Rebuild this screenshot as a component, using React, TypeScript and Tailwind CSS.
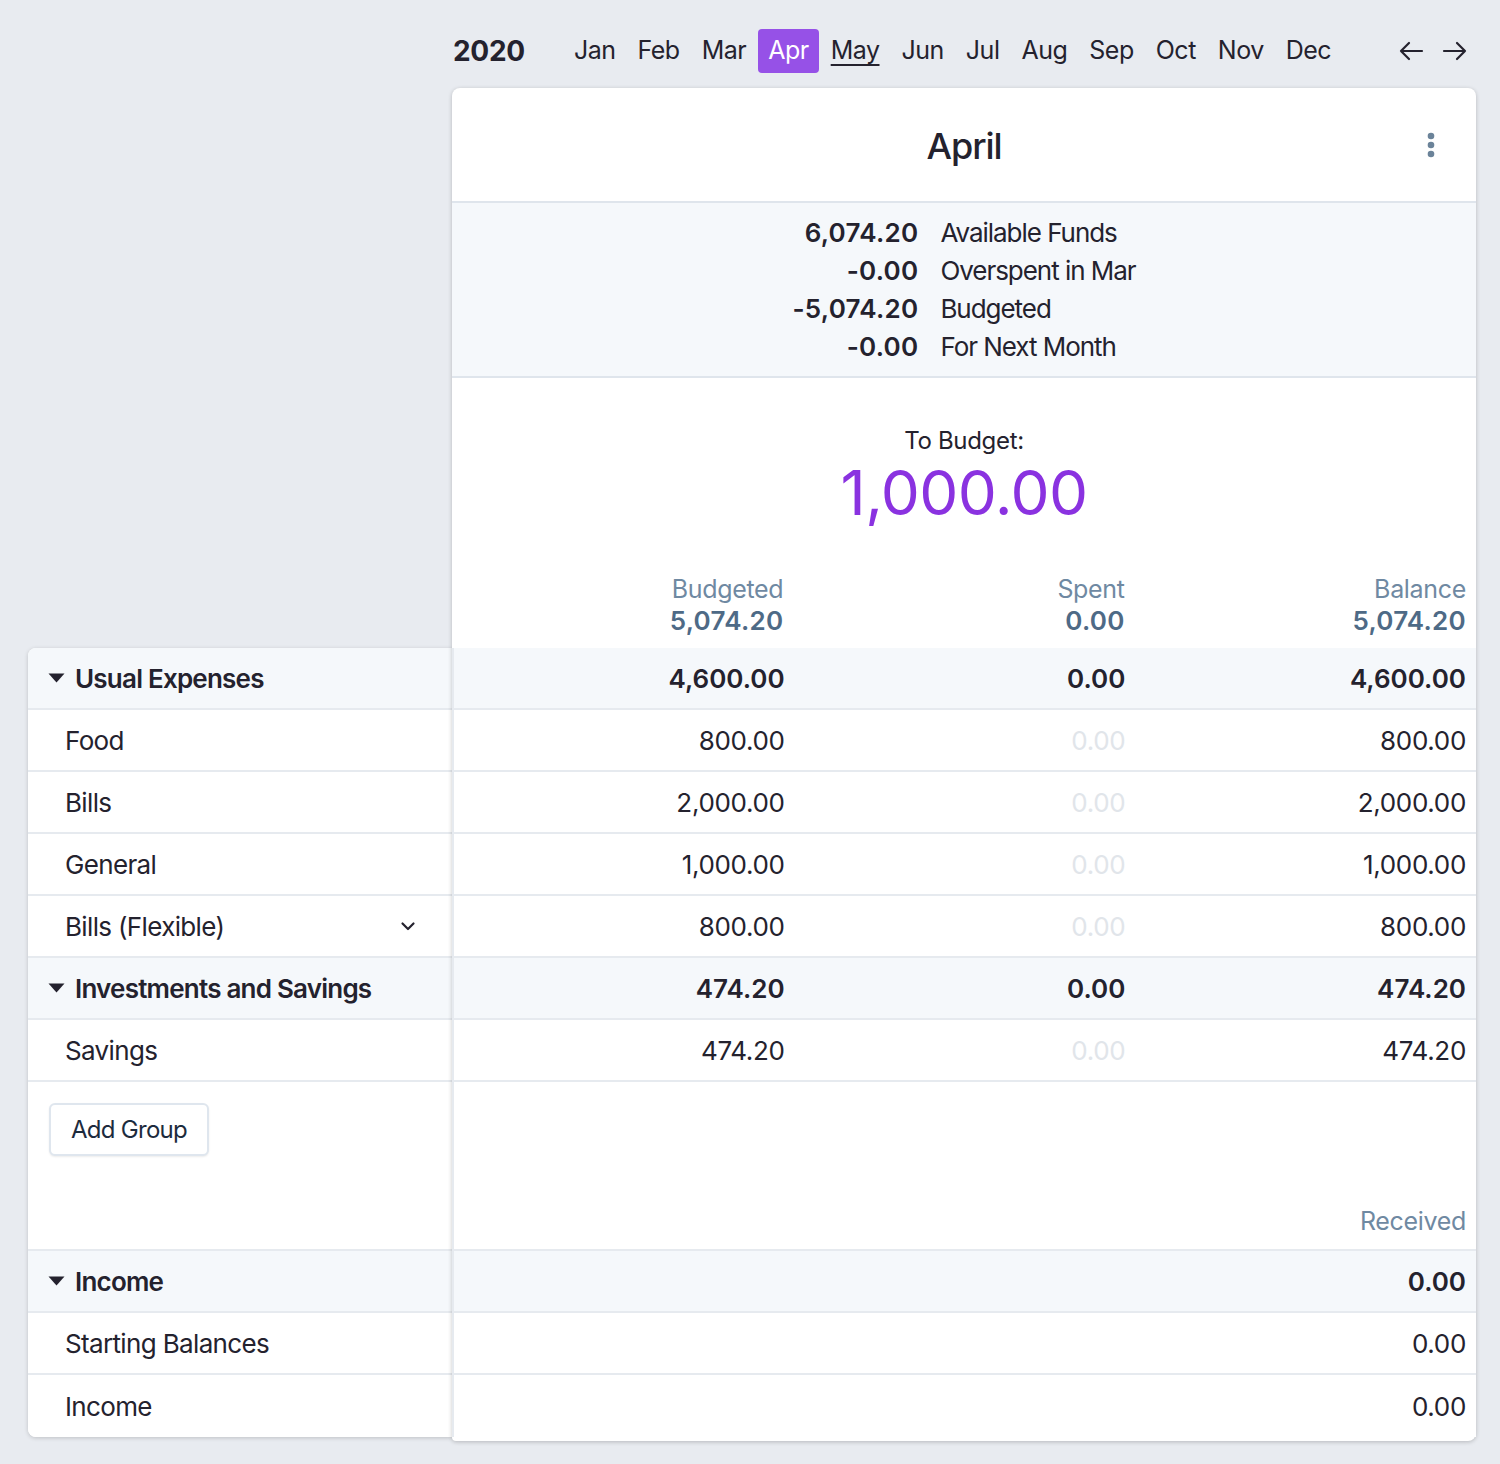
import React from "react";

type Row = { kind: "group" | "cat"; name: string; b: string; s: string; bal: string; chevron?: boolean };

const rows: Row[] = [
  { kind: "group", name: "Usual Expenses", b: "4,600.00", s: "0.00", bal: "4,600.00" },
  { kind: "cat", name: "Food", b: "800.00", s: "0.00", bal: "800.00" },
  { kind: "cat", name: "Bills", b: "2,000.00", s: "0.00", bal: "2,000.00" },
  { kind: "cat", name: "General", b: "1,000.00", s: "0.00", bal: "1,000.00" },
  { kind: "cat", name: "Bills (Flexible)", b: "800.00", s: "0.00", bal: "800.00", chevron: true },
  { kind: "group", name: "Investments and Savings", b: "474.20", s: "0.00", bal: "474.20" },
  { kind: "cat", name: "Savings", b: "474.20", s: "0.00", bal: "474.20" },
];

const income: { kind: "group" | "cat"; name: string; v: string }[] = [
  { kind: "group", name: "Income", v: "0.00" },
  { kind: "cat", name: "Starting Balances", v: "0.00" },
  { kind: "cat", name: "Income", v: "0.00" },
];

const months = ["Jan", "Feb", "Mar", "Apr", "May", "Jun", "Jul", "Aug", "Sep", "Oct", "Nov", "Dec"];

function Triangle() {
  return (
    <svg width="17" height="10" viewBox="0 0 17 10" className="shrink-0">
      <path d="M0.5 0.5 L16.5 0.5 L8.5 9.5 Z" fill="#24222e" />
    </svg>
  );
}

function LeftCell({ kind, name, chevron, last }: { kind: "group" | "cat"; name: string; chevron?: boolean; last?: boolean }) {
  const border = last ? "" : "border-b-2 border-[#e6eaef] ";
  if (kind === "group") {
    return (
      <div className={"h-[62px] " + border + "bg-[#f5f8fb] flex items-center pl-[20px] gap-[10px]"}>
        <Triangle />
        <span className="text-[26px] font-semibold text-[#24222e] tracking-[-0.03em]">{name}</span>
      </div>
    );
  }
  return (
    <div className={"h-[62px] " + border + "bg-white flex items-center pl-[37px] pr-[36px] justify-between"}>
      <span className="text-[26px] text-[#24222e] tracking-[-0.025em]">{name}</span>
      {chevron && (
        <svg width="16" height="10" viewBox="0 0 16 10">
          <path d="M2.5 2.5 L8 8 L13.5 2.5" fill="none" stroke="#24222e" strokeWidth="2.2" strokeLinecap="round" strokeLinejoin="round" />
        </svg>
      )}
    </div>
  );
}

export default function App() {
  return (
    <div className="min-h-[1464px] bg-[#e8ebf0] font-['Inter','Noto_Sans',sans-serif] text-[#24222e] tracking-[-0.02em] flex pl-[28px] pr-[24px]">
      {/* Left column */}
      <div className="w-[424px] shrink-0 pt-[648px]">
        <div className="bg-white rounded-l-[8px] shadow-[0_1px_4px_rgba(0,0,0,0.18)] overflow-hidden">
          {rows.map((r, i) => (
            <LeftCell key={i} kind={r.kind} name={r.name} chevron={r.chevron} />
          ))}
          <div className="h-[169px] border-b-2 border-[#e6eaef] pt-[21px] pl-[21px]">
            <button className="h-[53px] px-[20px] rounded-[6px] border-2 border-[#dfe6ee] bg-white shadow-[0_1px_2px_rgba(0,0,0,0.08)] text-[24px] tracking-[-0.03em] text-[#1d2b3d]">
              Add Group
            </button>
          </div>
          {income.map((r, i) => (
            <LeftCell key={i} kind={r.kind} name={r.name} last={i === income.length - 1} />
          ))}
        </div>
      </div>

      {/* Right column */}
      <div className="flex-1 flex flex-col relative z-10">
        <div className="h-[88px] flex items-center pt-[14px] pb-[0px]">
          <span className="text-[28px] font-bold text-[#24222e] ml-[1px] mr-[39px] tracking-[-0.01em]">2020</span>
          <div className="flex items-center gap-[2px]">
            {months.map((m) => (
              <div
                key={m}
                className={
                  "h-[44px] px-[10px] flex items-center rounded-[4px] text-[25px] tracking-[-0.02em] " +
                  (m === "Apr" ? "bg-[#9651e7] text-white" : m === "May" ? "underline underline-offset-[5px] decoration-2 text-[#24222e]" : "text-[#24222e]")
                }
              >
                {m}
              </div>
            ))}
          </div>
          <div className="ml-auto flex items-center gap-[18px] mr-[8px]">
            <svg width="26" height="22" viewBox="0 0 26 22">
              <path d="M24 11 H3 M11 3 L3 11 L11 19" fill="none" stroke="#24222e" strokeWidth="2.2" strokeLinecap="round" strokeLinejoin="round" />
            </svg>
            <svg width="26" height="22" viewBox="0 0 26 22">
              <path d="M2 11 H23 M15 3 L23 11 L15 19" fill="none" stroke="#24222e" strokeWidth="2.2" strokeLinecap="round" strokeLinejoin="round" />
            </svg>
          </div>
        </div>

        <div className="bg-white rounded-[8px] rounded-bl-[4px] shadow-[0_1px_4px_rgba(0,0,0,0.22)] pb-[4px]">
          {/* Title */}
          <div className="h-[115px] border-b-2 border-[#dfe5ec] grid grid-cols-[1fr_auto_1fr] items-center">
            <div />
            <div className="text-[36px] font-medium text-[#24222e] tracking-[-0.03em] pt-[3px]">April</div>
            <div className="flex justify-end pr-[41px]">
              <svg width="8" height="26" viewBox="0 0 8 26">
                <circle cx="4" cy="4" r="3.3" fill="#6b8399" />
                <circle cx="4" cy="13" r="3.3" fill="#6b8399" />
                <circle cx="4" cy="22" r="3.3" fill="#6b8399" />
              </svg>
            </div>
          </div>

          {/* Summary */}
          <div className="bg-[#f5f8fb] border-b-2 border-[#dfe5ec] pt-[11px] pb-[10px] flex justify-center">
            <div className="grid grid-cols-[auto_auto] gap-x-[22px] text-[26px] leading-[38px]">
              <div className="text-right font-semibold tracking-[0.01em]">6,074.20</div>
              <div className="tracking-[-0.04em]">Available Funds</div>
              <div className="text-right font-semibold tracking-[0.01em]">-0.00</div>
              <div className="tracking-[-0.04em]">Overspent in Mar</div>
              <div className="text-right font-semibold tracking-[0.01em]">-5,074.20</div>
              <div className="tracking-[-0.04em]">Budgeted</div>
              <div className="text-right font-semibold tracking-[0.01em]">-0.00</div>
              <div className="tracking-[-0.04em]">For Next Month</div>
            </div>
          </div>

          {/* To Budget */}
          <div className="flex flex-col items-center pt-[46px]">
            <div className="text-[24px] leading-[34px] text-[#24222e]">To Budget:</div>
            <div className="text-[62px] leading-[70px] text-[#8a32e0] tracking-[-0.01em]">1,000.00</div>
          </div>

          {/* Column headers */}
          <div className="grid grid-cols-3 pt-[45px] pb-[11px]">
            {[
              ["Budgeted", "5,074.20"],
              ["Spent", "0.00"],
              ["Balance", "5,074.20"],
            ].map(([l, v]) => (
              <div key={l} className="flex flex-col items-end pr-[10px]">
                <div className="text-[25px] leading-[32px] text-[#6f89a2]">{l}</div>
                <div className="text-[26px] leading-[32px] font-semibold text-[#4e6a86] tracking-[0.01em]">{v}</div>
              </div>
            ))}
          </div>

          {/* Rows */}
          <div className="border-l-2 border-[#e6eaef]">
            {rows.map((r, i) => (
              <div
                key={i}
                className={
                  "h-[62px] border-b-2 border-[#e6eaef] grid grid-cols-3 items-center text-[26px] " +
                  (r.kind === "group" ? "bg-[#f5f8fb] font-semibold tracking-[0]" : "bg-white")
                }
              >
                <div className="text-right pr-[10px]">{r.b}</div>
                <div className={"text-right pr-[10px] " + (r.kind === "cat" ? "text-[#e1e5ea]" : "")}>{r.s}</div>
                <div className="text-right pr-[10px]">{r.bal}</div>
              </div>
            ))}
            <div className="h-[169px] border-b-2 border-[#e6eaef] flex items-end justify-end pr-[10px] pb-[12px]">
              <div className="text-[25px] leading-[32px] text-[#6f89a2]">Received</div>
            </div>
            {income.map((r, i) => (
              <div
                key={i}
                className={
                  "h-[62px] flex items-center justify-end pr-[10px] text-[26px] " +
                  (i < income.length - 1 ? "border-b-2 border-[#e6eaef] " : "") +
                  (r.kind === "group" ? "bg-[#f5f8fb] font-semibold tracking-[0]" : "bg-white")
                }
              >
                {r.v}
              </div>
            ))}
          </div>
        </div>
      </div>
    </div>
  );
}
